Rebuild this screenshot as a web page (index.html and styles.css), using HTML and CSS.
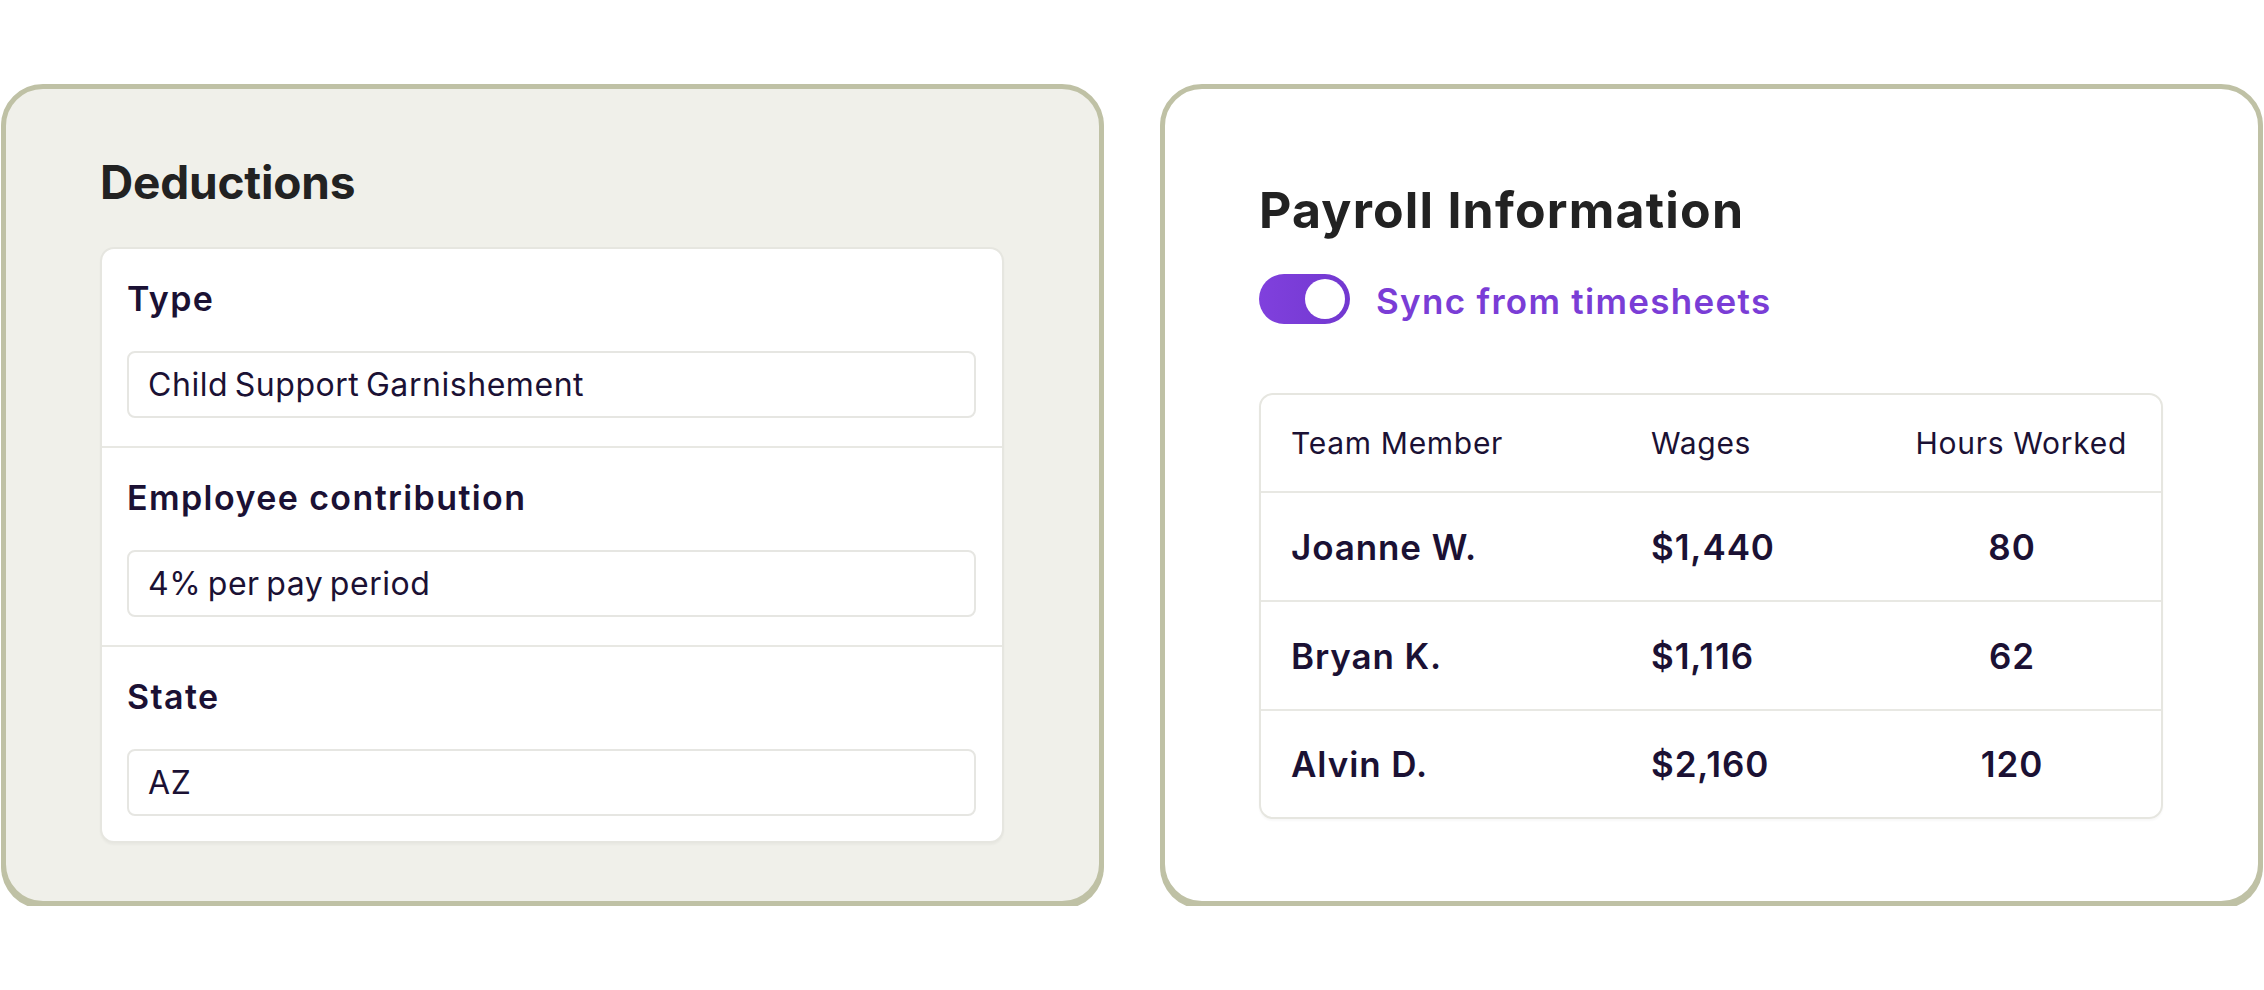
FILE: index.html
```html
<!DOCTYPE html>
<html lang="en">
<head>
<meta charset="utf-8">
<title>Deductions and Payroll</title>
<link rel="stylesheet" href="styles.css">
</head>
<body>
<main class="page">
  <section class="card card-muted">
    <h2 class="card-title">Deductions</h2>
    <div class="form-box">
      <div class="form-section">
        <div class="field-label">Type</div>
        <div class="field-input">Child Support Garnishement</div>
      </div>
      <div class="form-section">
        <div class="field-label">Employee contribution</div>
        <div class="field-input">4% per pay period</div>
      </div>
      <div class="form-section form-section-last">
        <div class="field-label">State</div>
        <div class="field-input">AZ</div>
      </div>
    </div>
  </section>

  <section class="card card-white">
    <h2 class="card-title card-title-lg">Payroll Information</h2>
    <div class="sync-row">
      <span class="toggle"><span class="toggle-knob"></span></span>
      <span class="sync-label">Sync from timesheets</span>
    </div>
    <div class="table">
      <div class="table-row table-head">
        <div class="cell">Team Member</div>
        <div class="cell">Wages</div>
        <div class="cell cell-hours-head">Hours Worked</div>
      </div>
      <div class="table-row">
        <div class="cell">Joanne W.</div>
        <div class="cell">$1,440</div>
        <div class="cell cell-hours">80</div>
      </div>
      <div class="table-row">
        <div class="cell">Bryan K.</div>
        <div class="cell">$1,116</div>
        <div class="cell cell-hours">62</div>
      </div>
      <div class="table-row table-row-last">
        <div class="cell">Alvin D.</div>
        <div class="cell">$2,160</div>
        <div class="cell cell-hours">120</div>
      </div>
    </div>
  </section>
</main>
</body>
</html>
```

FILE: styles.css
```css
* {
  box-sizing: border-box;
}

html, body {
  margin: 0;
  padding: 0;
  background: #ffffff;
}

body {
  font-family: Inter, "Liberation Sans", sans-serif;
  color: #1b1134;
}

.page {
  display: flex;
  align-items: stretch;
  gap: 56px;
  padding: 84px 1px 0 1px;
  width: 2264px;
}

.card {
  flex: 0 0 1103px;
  width: 1103px;
  border: 5px solid #bfc1a5;
  border-radius: 42px;
  box-shadow: 0 3px 0 #bfc1a5;
}

.card-muted {
  background: #f0f0ea;
  padding: 65px 95px 58px 94px;
}

.card-white {
  background: #ffffff;
  padding: 92px 94px 0 94px;
}

.card-title {
  margin: 0;
  font-size: 46px;
  line-height: 56px;
  font-weight: 700;
  color: #222222;
  letter-spacing: -0.2px;
}

.card-title-lg {
  font-size: 50px;
  line-height: 58px;
  letter-spacing: 1.2px;
}

/* Deductions form */
.form-box {
  margin-top: 37px;
  background: #ffffff;
  border: 2px solid #e6e6e0;
  border-radius: 14px;
  box-shadow: 0 2px 2px rgba(0, 0, 0, 0.03);
}

.form-section {
  padding: 30px 26px 28px 25px;
  border-bottom: 2px solid #e8e8e3;
}

.form-section-last {
  border-bottom: none;
  padding-bottom: 25px;
}

.field-label {
  font-size: 34px;
  line-height: 40px;
  font-weight: 600;
  letter-spacing: 1.4px;
  color: #1b1134;
}

.field-input {
  margin-top: 32px;
  height: 67px;
  display: flex;
  align-items: center;
  padding: 0 19px;
  border: 2px solid #e6e6e2;
  border-radius: 8px;
  background: #ffffff;
  font-size: 32px;
  line-height: 38px;
  font-weight: 400;
  letter-spacing: 0.55px;
  word-spacing: -3px;
  color: #1b1134;
}

/* Payroll */
.sync-row {
  margin-top: 35px;
  display: flex;
  align-items: center;
  gap: 26px;
}

.toggle {
  display: flex;
  align-items: center;
  justify-content: flex-end;
  width: 91px;
  height: 50px;
  padding: 0 5px;
  border-radius: 25px;
  background: linear-gradient(90deg, #8040dd 0%, #7238d0 100%);
}

.toggle-knob {
  width: 40px;
  height: 40px;
  border-radius: 50%;
  background: #ffffff;
}

.sync-label {
  font-size: 35px;
  line-height: 42px;
  font-weight: 600;
  letter-spacing: 1.3px;
  color: #7a3dd6;
  padding-top: 4px;
}

.table {
  margin-top: 69px;
  width: 904px;
  border: 2px solid #e6e6e0;
  border-radius: 14px;
  overflow: hidden;
  box-shadow: 0 2px 2px rgba(0, 0, 0, 0.03);
}

.table-row {
  display: grid;
  grid-template-columns: 360px 242px 238px;
  align-items: center;
  height: 109px;
  padding: 0 30px;
  border-bottom: 2px solid #e8e8e3;
  font-size: 35px;
  line-height: 42px;
  font-weight: 600;
  letter-spacing: 0.9px;
  color: #1b1134;
}

.table-head {
  height: 98px;
  font-size: 30px;
  font-weight: 400;
  letter-spacing: 0.7px;
}

.table-row-last {
  border-bottom: none;
  height: 106px;
}

.cell-hours {
  text-align: center;
}

.cell-hours-head {
  text-align: right;
  padding-right: 4px;
}
```
